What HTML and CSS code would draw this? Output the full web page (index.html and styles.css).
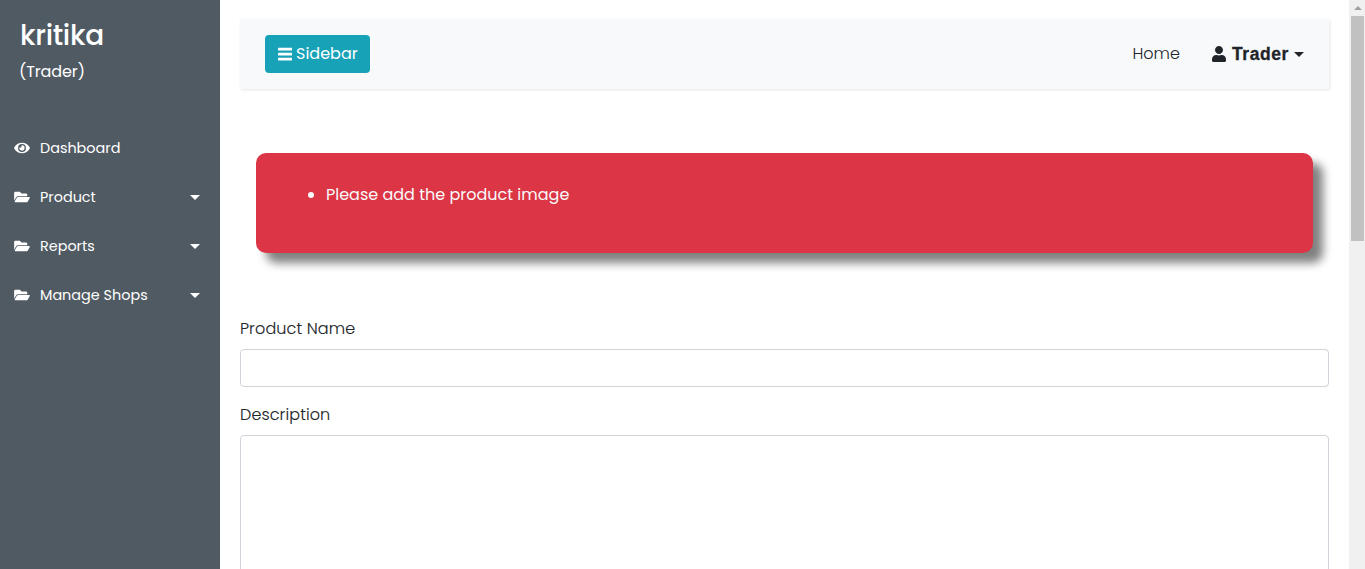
FILE: index.html
```html
<!DOCTYPE html>
<html lang="en">
<head>
<meta charset="utf-8">
<title>Add Product</title>
<link rel="stylesheet" href="styles.css">
</head>
<body>
<svg class="defs" aria-hidden="true">
  <symbol id="folder" viewBox="0 0 576 512"><path d="M572.694 292.093L500.27 416.248A63.997 63.997 0 0 1 444.989 448H45.025c-18.523 0-30.064-20.093-20.731-36.093l72.424-124.155A64 64 0 0 1 152 256h399.964c18.523 0 30.064 20.093 20.73 36.093zM152 224h328v-48c0-26.51-21.49-48-48-48H272l-64-64H48C21.49 64 0 85.49 0 112v278.046l69.077-118.418C86.214 242.25 117.989 224 152 224z"/></symbol>
  <symbol id="eye" viewBox="0 0 576 512"><path d="M572.52 241.4C518.29 135.59 410.93 64 288 64S57.68 135.64 3.48 241.41a32.35 32.35 0 0 0 0 29.19C57.71 376.41 165.07 448 288 448s230.32-71.64 284.52-177.41a32.35 32.35 0 0 0 0-29.19zM288 400a144 144 0 1 1 144-144 143.93 143.93 0 0 1-144 144zm0-240a95.31 95.31 0 0 0-25.31 3.79 47.85 47.85 0 0 1-66.9 66.9A95.78 95.78 0 1 0 288 160z"/></symbol>
  <symbol id="user" viewBox="0 0 448 512"><path d="M224 256c70.7 0 128-57.3 128-128S294.7 0 224 0 96 57.3 96 128s57.3 128 128 128zm89.6 32h-16.7c-22.2 10.2-46.9 16-72.9 16s-50.6-5.8-72.9-16h-16.7C60.2 288 0 348.2 0 422.4V464c0 26.5 21.5 48 48 48h352c26.5 0 48-21.5 48-48v-41.6c0-74.2-60.2-134.4-134.4-134.4z"/></symbol>
  <symbol id="bars" viewBox="0 0 14 16"><rect x="0" y="1.7" width="14" height="2.7" rx=".5"/><rect x="0" y="6.7" width="14" height="2.7" rx=".5"/><rect x="0" y="11.7" width="14" height="2.7" rx=".5"/></symbol>
</svg>
<div class="wrapper">
  <nav class="sidebar">
    <header class="profile">
      <h3 class="profile-name">kritika</h3>
      <p class="profile-role">(Trader)</p>
    </header>
    <ul class="menu">
      <li><a class="menu-link"><svg class="menu-icon"><use href="#eye"/></svg><span>Dashboard</span></a></li>
      <li><a class="menu-link"><svg class="menu-icon"><use href="#folder"/></svg><span>Product</span><i class="caret"></i></a></li>
      <li><a class="menu-link"><svg class="menu-icon"><use href="#folder"/></svg><span>Reports</span><i class="caret"></i></a></li>
      <li><a class="menu-link"><svg class="menu-icon"><use href="#folder"/></svg><span>Manage Shops</span><i class="caret"></i></a></li>
    </ul>
  </nav>
  <main class="content">
    <nav class="topbar">
      <button class="toggle" type="button"><svg class="toggle-icon"><use href="#bars"/></svg><span>Sidebar</span></button>
      <div class="links">
        <a class="home">Home</a>
        <a class="account"><svg class="user-icon"><use href="#user"/></svg><b>Trader</b><i class="caret"></i></a>
      </div>
    </nav>
    <div class="alert"><ul class="errors"><li>Please add the product image</li></ul></div>
    <form class="form">
      <label class="label" for="name">Product Name</label>
      <input class="field" id="name" type="text">
      <label class="label" for="description">Description</label>
      <textarea class="field area" id="description"></textarea>
    </form>
  </main>
  <div class="scrollbar"><i class="scroll-up"></i><i class="thumb"></i></div>
</div>
</body>
</html>
```
FILE: styles.css
```css
* { box-sizing: border-box; }
body { margin: 0; height: 569px; overflow: hidden; background: #fff; color: #212529; font: 300 16px/24px Poppins, Inter, sans-serif; }
.defs { display: none; }
svg { fill: currentColor; flex: none; }
.wrapper { display: flex; height: 569px; }
.sidebar { width: 220px; flex: none; background: #505a63; color: #fff; font-weight: 400; }
.profile { padding: 19px 20px 0; height: 123px; }
.profile-name { margin: 0 0 7px; font-size: 28px; line-height: 34px; font-weight: 500; letter-spacing: -.3px; }
.profile-role { margin: 0 0 0 -1px; line-height: 24px; letter-spacing: -.1px; }
.menu { margin: 0; padding: 0; list-style: none; font-size: 14.4px; }
.menu-link { display: flex; align-items: center; height: 49px; padding: 0 20px 0 14px; }
.menu-icon { width: 16px; height: 14px; margin-right: 10px; }
.caret { border: solid transparent; border-width: 5px 5px 0; border-top-color: currentColor; }
.menu-link .caret { margin-left: auto; margin-top: 2px; }
.content { flex: 1; min-width: 0; padding: 19px 20px 0; overflow: hidden; }
.topbar { display: flex; align-items: center; justify-content: space-between; height: 70px; padding: 0 25px; background: #f8f9fb; box-shadow: 1px 1px 3px rgba(0,0,0,.1); }
.toggle { display: flex; align-items: center; height: 38px; width: 105px; padding: 0 12px; border: 0; border-radius: 4px; background: #17a2b8; color: #fff; font: 400 16px/24px Poppins, Inter, sans-serif; }
.toggle-icon { width: 14px; height: 16px; margin: 0 4px 1px 1px; }
.links { display: flex; align-items: center; height: 40px; }
.home { margin-right: 32px; }
.account { display: flex; align-items: center; }
.account b { font: 700 17.5px/24px "Liberation Sans", sans-serif; letter-spacing: .6px; -webkit-text-stroke: .3px currentColor; }
.user-icon { width: 14px; height: 16px; margin: 0 6px 1px 0; }
.account .caret { margin-left: 5px; margin-top: 1px; }
.alert { height: 100px; margin: 64px 16px; padding: 30px; border-radius: 10px; background: #dc3545; color: #f8f9fa; font-weight: 400; box-shadow: 10px 10px 10px #808080; }
.errors { margin: 0; padding-left: 40px; }
.label { display: block; margin-bottom: 8px; height: 24px; font-weight: 300; letter-spacing: .1px; -webkit-text-stroke: .1px currentColor; }
.field { display: block; width: 100%; height: 38px; margin: 0 0 16px; border: 1px solid #ced4da; border-radius: 4px; background: #fff; }
.area { height: 200px; resize: none; }
.scrollbar { width: 16px; flex: none; padding: 6px 1px 0 2px; background: #f0f0f0; }
.scroll-up { display: block; width: 8px; margin: 0 auto 6px; border: solid transparent; border-width: 0 4px 4px; border-bottom-color: #a0a0a0; }
.thumb { display: block; height: 225px; background: #c1c1c1; }
```
